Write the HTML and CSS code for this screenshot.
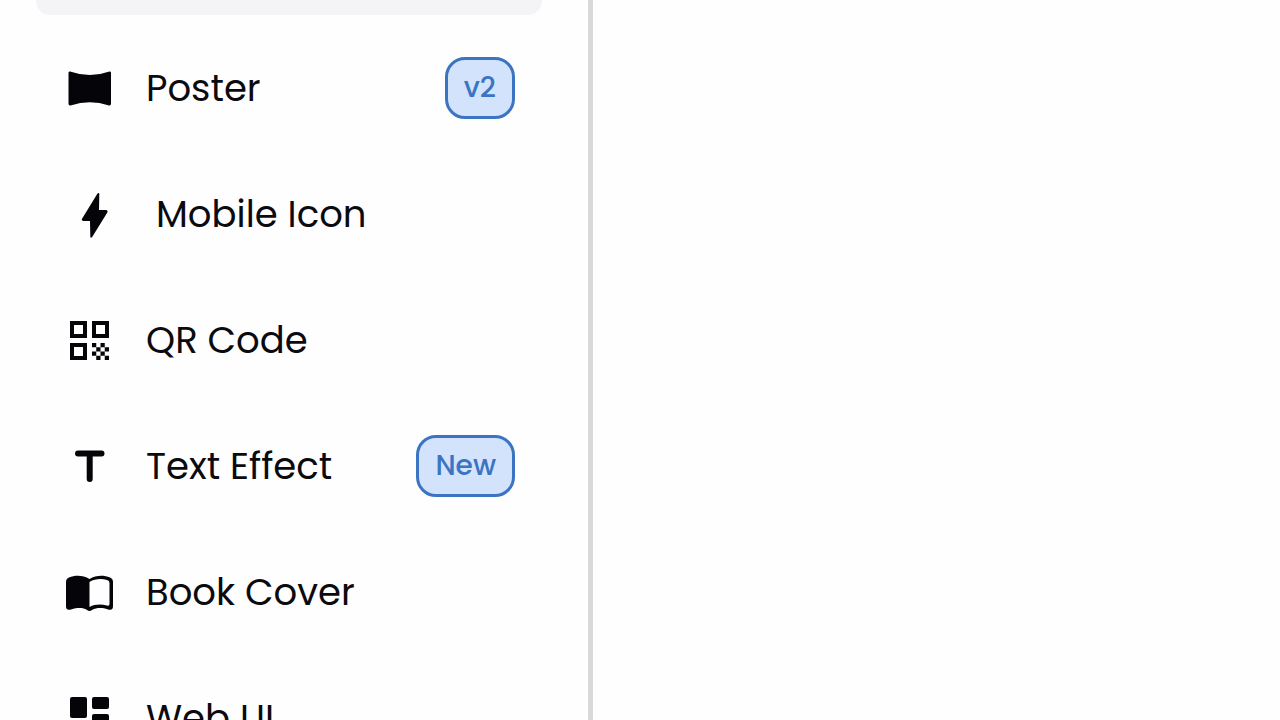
FILE: index.html
```
<!DOCTYPE html>
<html lang="en">
<head>
    <meta charset="UTF-8">
    <meta name="viewport" content="width=device-width, initial-scale=1.0">
    <title>Templates</title>
    <link rel="stylesheet" href="styles.css">
</head>
<body>
    <div class="layout">
        <aside class="sidebar">
            <div class="active-item"></div>
            <nav class="menu">
                <a class="menu-item" href="#poster">
                    <svg class="menu-icon" viewBox="0 0 48 48" aria-hidden="true">
                        <path d="M4 7.500Q24 14.500 43.500 7.500Q45 7 45 9V39.500Q45 42 43 41.500Q24 35 4.500 41.500Q2.500 42 2.500 39.500V9Q2.500 7 4 7.500Z"/>
                    </svg>
                    <span>Poster</span>
                    <span class="badge">v2</span>
                </a>
                <a class="menu-item" href="#mobile-icon">
                    <svg class="menu-icon wide" viewBox="0 0 48 48" aria-hidden="true">
                        <path d="M26.500 3.500Q28.500 2 28.300 4.500L28 20H35Q37.500 20.500 36 23L21.500 46.500Q19.500 49 19.300 46.500L19 31H12.500Q9.800 30.500 11.200 28.500Z"/>
                    </svg>
                    <span>Mobile Icon</span>
                </a>
                <a class="menu-item" href="#qr-code">
                    <svg class="menu-icon" viewBox="0 0 48 48" aria-hidden="true">
                        <path fill-rule="evenodd" d="M4 5h17v17H4zM8 9v9h9V9zM26 5h17v17H26zM30 9v9h9V9zM4 27h17v17H4zM8 31v9h9v-9z"/>
                        <path d="M26 27h4.250v4.250H26zM34.500 27h4.250v4.250H34.500zM30.250 31.250h4.250v4.250h-4.250zM38.750 31.250H43v4.250h-4.250zM26 35.500h4.250v4.250H26zM34.500 35.500h4.250v4.250H34.500zM30.250 39.750h4.250V44h-4.250zM38.750 39.750H43V44h-4.250z"/>
                    </svg>
                    <span>QR Code</span>
                </a>
                <a class="menu-item" href="#text-effect">
                    <svg class="menu-icon" viewBox="0 0 48 48" aria-hidden="true">
                        <path class="stroke-bold" d="M12 11.500H35.500M23.700 12V37"/>
                    </svg>
                    <span>Text Effect</span>
                    <span class="badge">New</span>
                </a>
                <a class="menu-item" href="#book-cover">
                    <svg class="menu-icon" viewBox="0 0 48 48" aria-hidden="true">
                        <path d="M23.500 11C17 7 9 7 3 9.500Q0 10.500 0 14V38Q0 43 5 41.500C12 39.500 17 39.500 21 42Q23.500 44 26 42C31 39.500 36 39.500 42 41.500Q47 43 47 38V14Q47 10.500 44 9.500C38 7 30 7 23.500 11Z"/>
                        <path class="page" d="M23.500 14C29 10.500 36 10.500 41 12Q43.500 12.700 43.500 15V36Q43.500 38.300 41 37.500C35 36 29 36 23.500 39Z"/>
                    </svg>
                    <span>Book Cover</span>
                </a>
                <a class="menu-item" href="#web-ui">
                    <svg class="menu-icon" viewBox="0 0 48 48" aria-hidden="true">
                        <rect x="4" y="3" width="17" height="21" rx="2"/>
                        <rect x="26" y="3" width="17" height="12" rx="2"/>
                        <rect x="26" y="20" width="17" height="21" rx="2"/>
                        <rect x="4" y="29" width="17" height="12" rx="2"/>
                    </svg>
                    <span>Web UI</span>
                </a>
            </nav>
        </aside>
        <main class="content"></main>
    </div>
</body>
</html>
```
FILE: styles.css
```
* {
    box-sizing: border-box;
    margin: 0;
    padding: 0;
}

body {
    font-family: Poppins, Inter, sans-serif;
    color: #0b0b0f;
    background: #fefefe;
}

.layout {
    display: flex;
    height: 100vh;
    overflow: hidden;
}

.sidebar {
    flex: 0 0 593px;
    padding: 0 46px 0 36px;
    border-right: 5px solid #d9d9da;
}

.active-item {
    height: 15px;
    margin-bottom: 21px;
    background: #f4f4f7;
    border-radius: 0 0 14px 14px;
}

.menu {
    display: flex;
    flex-direction: column;
    gap: 22px;
}

.menu-item {
    display: flex;
    align-items: center;
    gap: 32px;
    height: 104px;
    padding: 0 27px 0 30px;
    border-radius: 20px;
    color: inherit;
    font-size: 37px;
    line-height: 56px;
    text-decoration: none;
    white-space: nowrap;
}

.menu-icon {
    flex: none;
    width: 48px;
    height: 48px;
    fill: #050509;
}

.menu-icon.wide {
    width: 58px;
}

.stroke-bold {
    fill: none;
    stroke: #050509;
    stroke-width: 6;
    stroke-linecap: round;
}

.page {
    fill: #fefefe;
}

.badge {
    margin-left: auto;
    padding: 0 16px;
    border: 3px solid #3b74c3;
    border-radius: 20px;
    background: #d3e3fc;
    color: #3b74c3;
    font-size: 28px;
    font-weight: 500;
}

.content {
    flex: 1;
}
```
